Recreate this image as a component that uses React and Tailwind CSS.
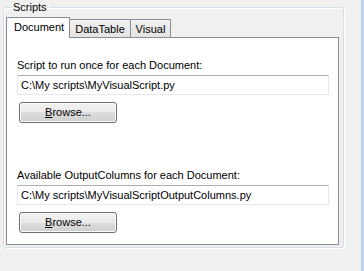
export default function App() {
  const tabs = [
    { name: 'Document', w: 'w-[64px]' },
    { name: 'DataTable', w: 'w-[61px]' },
    { name: 'Visual', w: 'w-[40px]' },
  ];

  const ScriptRow = ({ label, path }) => (
    <div className="flex flex-col">
      <div className="leading-[13px] h-[13px] whitespace-nowrap">{label}</div>
      <div className="mt-[3px] w-[312px] h-[20px] border border-[#e3e9ef] border-t-[#abadb3] bg-white pl-[3px] leading-[18px] whitespace-nowrap overflow-hidden">
        {path}
      </div>
      <button className="mt-[7px] ml-[2px] w-[98px] h-[21px] rounded-[3px] border border-[#707070] shadow-[inset_0_0_0_1px_#fcfcfc] bg-[linear-gradient(to_bottom,#f2f2f2_0%,#ebebeb_50%,#dddddd_50%,#cfcfcf_100%)] leading-[19px] text-center">
        <span className="underline">B</span>rowse...
      </button>
    </div>
  );

  return (
    <div className="w-[364px] h-[271px] bg-[#f0f0f0] flex text-[11px] text-black font-['Liberation_Sans',Arial,sans-serif]">
      {/* group box */}
      <div className="flex-1 pl-[3px]">
        <fieldset className="w-[341px] h-[248px] border border-[#d5dfe5] rounded-[3px] shadow-[inset_1px_1px_0_#fff,1px_1px_0_#fff] pl-[2px] pr-[4px]">
          <legend className="ml-[5px] px-[2px] leading-[14px] h-[14px]">Scripts</legend>

          {/* tab control */}
          <div className="mt-[3px] flex flex-col">
            <div className="flex items-end h-[20px]">
              {tabs.map((t, i) =>
                i === 0 ? (
                  <div
                    key={t.name}
                    className={`${t.w} h-[21px] -mb-px relative z-10 bg-white border border-b-0 border-[#898c95] pl-[7px] leading-[17px] pt-[1px]`}
                  >
                    {t.name}
                  </div>
                ) : (
                  <div
                    key={t.name}
                    className={`${t.w} h-[18px] border-t border-r border-[#898c95] bg-[linear-gradient(to_bottom,#f2f2f2,#e3e3e3)] text-center leading-[17px] pt-[1px]`}
                  >
                    {t.name}
                  </div>
                )
              )}
            </div>
            <div className="w-[333px] h-[208px] bg-white border border-[#898c95] pl-[10px] pt-[21px] flex flex-col gap-[46px]">
              <ScriptRow
                label="Script to run once for each Document:"
                path="C:\My scripts\MyVisualScript.py"
              />
              <ScriptRow
                label="Available OutputColumns for each Document:"
                path="C:\My scripts\MyVisualScriptOutputColumns.py"
              />
            </div>
          </div>
        </fieldset>
      </div>
      {/* window edge */}
      <div className="w-[3px] bg-[#bcd3ea]" />
    </div>
  );
}
